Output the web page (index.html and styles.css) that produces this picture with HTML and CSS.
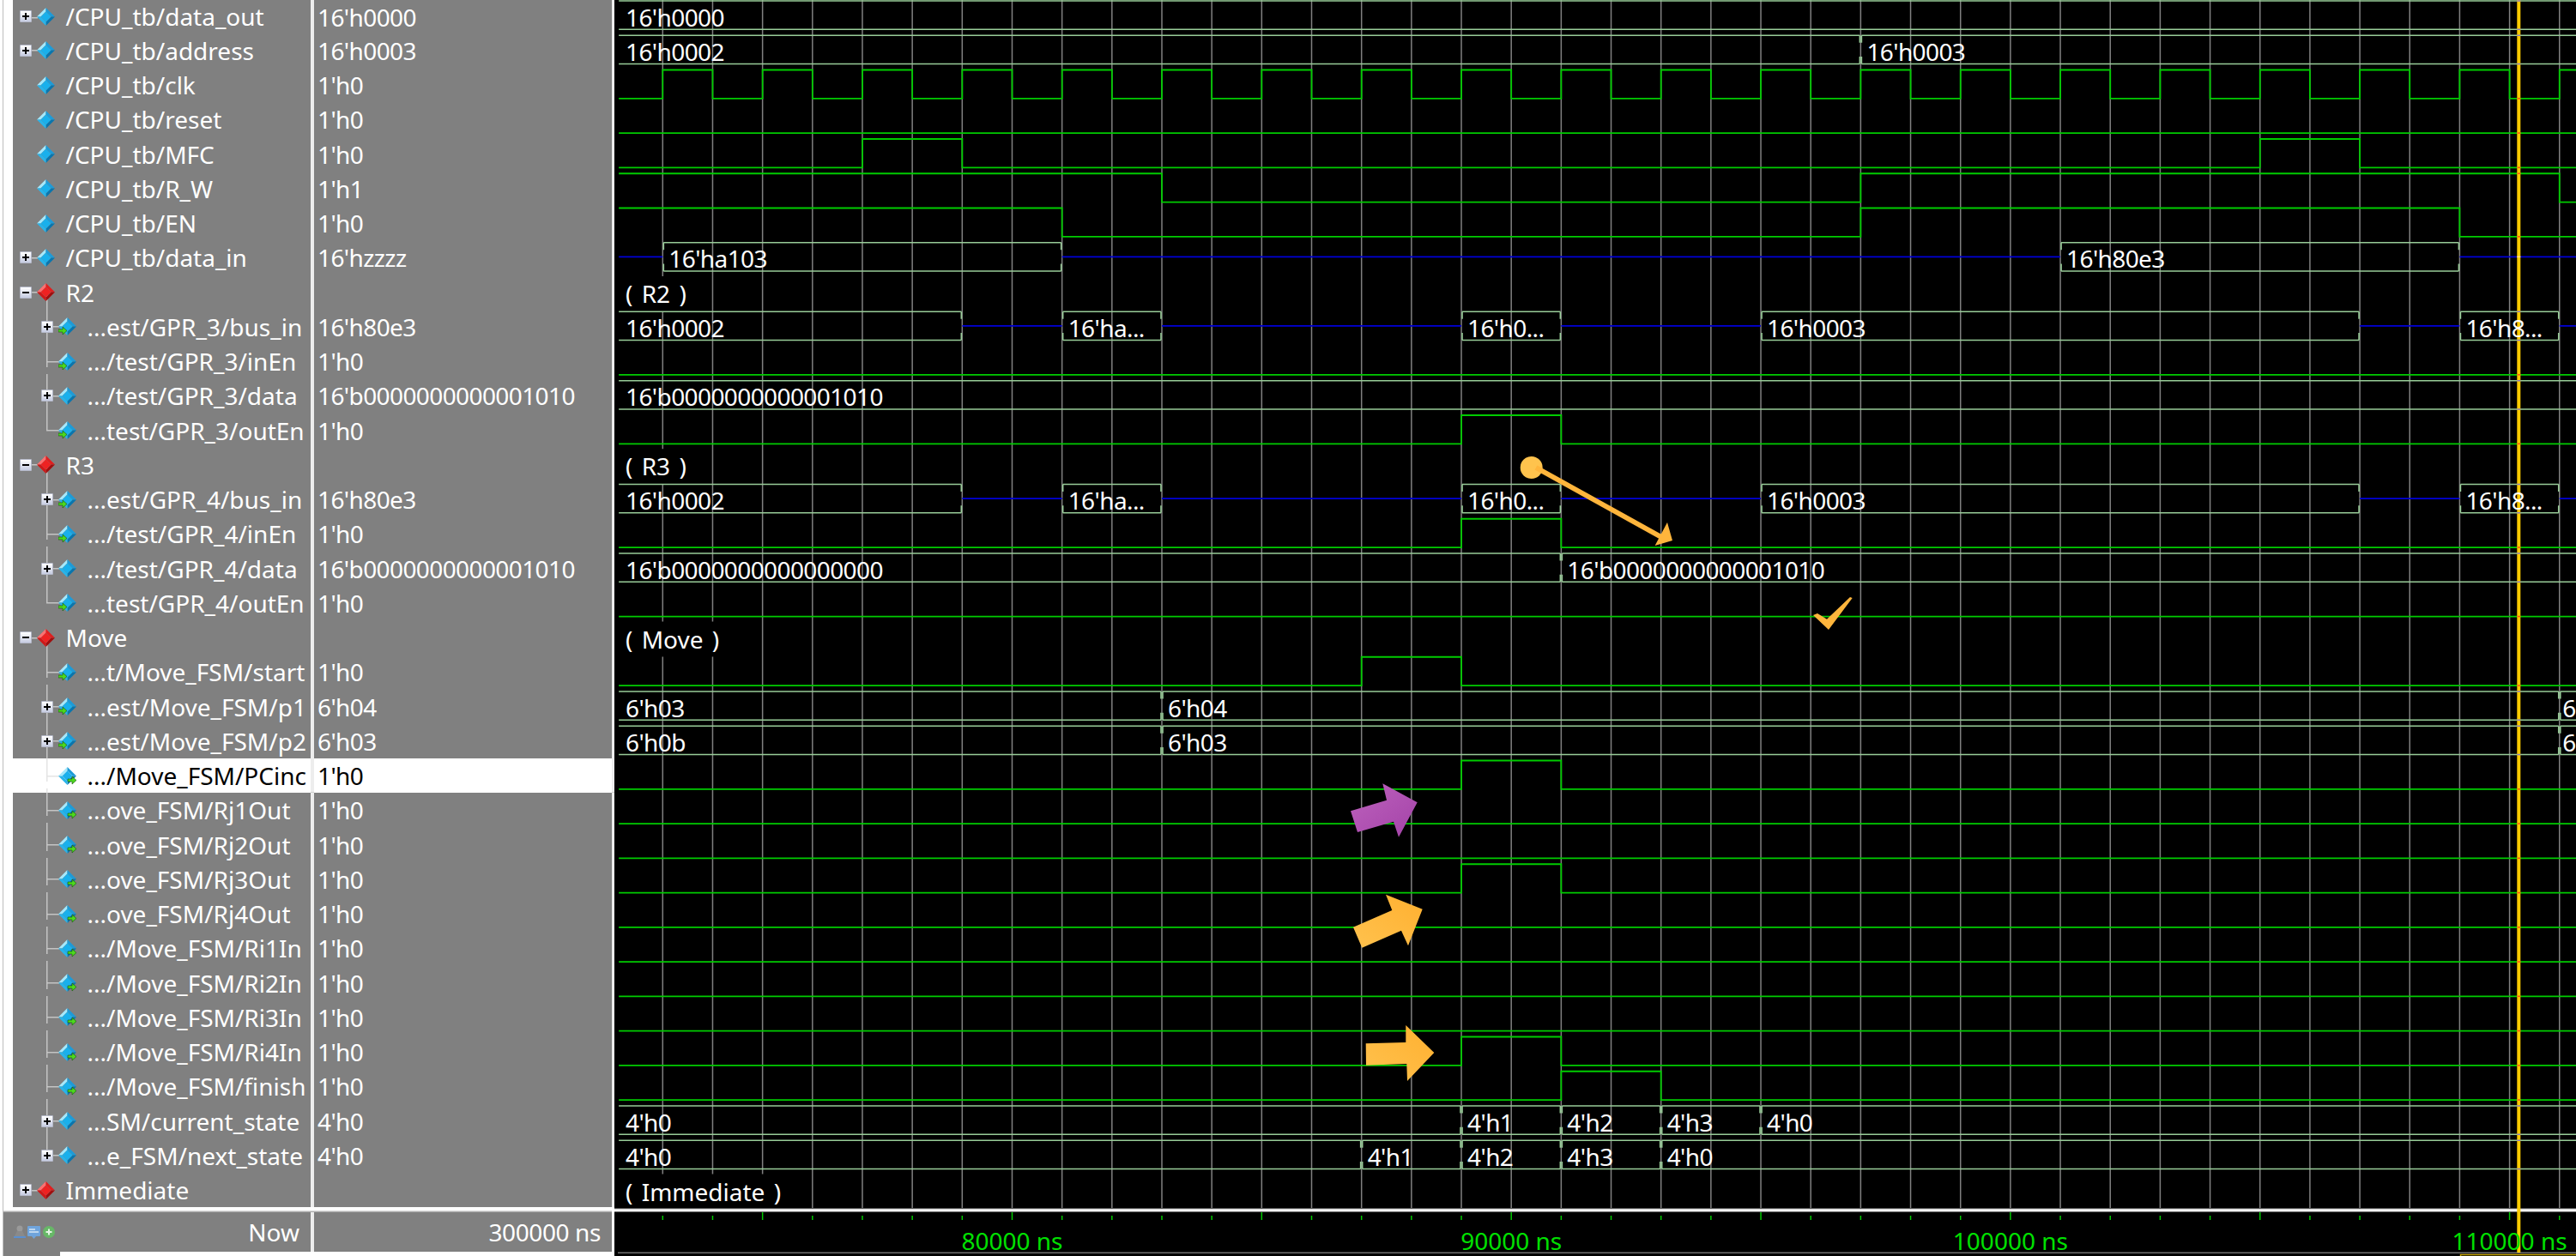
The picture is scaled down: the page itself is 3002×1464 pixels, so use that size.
FILE: index.html
```html
<!DOCTYPE html>
<html lang="en">
<head>
    <meta charset="UTF-8">
    <title>Wave - CPU_tb</title>
    <link rel="stylesheet" href="styles.css">
</head>
<body>
    <svg class="defs" width="0" height="0">
        <symbol id="gem" viewBox="0 0 21 21">
            <polygon points="10.5,0 0,10.5 4.5,10.5 10.5,4.5" fill="#a5e8fb"/>
            <polygon points="10.5,0 21,10.5 16.5,10.5 10.5,4.5" fill="#1d9bd8"/>
            <polygon points="21,10.5 10.5,21 10.5,16.5 16.5,10.5" fill="#0a76ae"/>
            <polygon points="0,10.5 10.5,21 10.5,16.5 4.5,10.5" fill="#28b4ea"/>
            <polygon points="10.5,4.5 16.5,10.5 10.5,16.5 4.5,10.5" fill="#19b0ec"/>
        </symbol>
        <symbol id="gem-in" viewBox="0 0 21 21">
            <use href="#gem"/>
            <path d="M0 14h5v-3l5 4.5-5 4.5v-3H0z" fill="#4cd81e" stroke="#14500c" stroke-width=".6"/>
        </symbol>
        <symbol id="gem-out" viewBox="0 0 21 21">
            <use href="#gem"/>
            <path d="M11 14h5v-3l5 4.5-5 4.5v-3h-5z" fill="#4cd81e" stroke="#14500c" stroke-width=".6"/>
        </symbol>
        <symbol id="red" viewBox="0 0 21 21">
            <polygon points="10.5,0 0,10.5 4.5,10.5 10.5,4.5" fill="#ff7070"/>
            <polygon points="10.5,0 21,10.5 16.5,10.5 10.5,4.5" fill="#e01f1f"/>
            <polygon points="21,10.5 10.5,21 10.5,16.5 16.5,10.5" fill="#a00f0f"/>
            <polygon points="0,10.5 10.5,21 10.5,16.5 4.5,10.5" fill="#d01818"/>
            <polygon points="10.5,4.5 16.5,10.5 10.5,16.5 4.5,10.5" fill="#ee2222"/>
        </symbol>
    </svg>

    <div class="app">
        <div class="side">
            <div class="names">
                <div class="row first t"><div class="nm"><span class="exp plus"></span><svg class="ico"><use href="#gem"/></svg><span>/CPU_tb/data_out</span></div><div class="val">16'h0000</div></div>
                <div class="row t"><div class="nm"><span class="exp plus"></span><svg class="ico"><use href="#gem"/></svg><span>/CPU_tb/address</span></div><div class="val">16'h0003</div></div>
                <div class="row"><div class="nm"><span class="exp"></span><svg class="ico"><use href="#gem"/></svg><span>/CPU_tb/clk</span></div><div class="val">1'h0</div></div>
                <div class="row"><div class="nm"><span class="exp"></span><svg class="ico"><use href="#gem"/></svg><span>/CPU_tb/reset</span></div><div class="val">1'h0</div></div>
                <div class="row"><div class="nm"><span class="exp"></span><svg class="ico"><use href="#gem"/></svg><span>/CPU_tb/MFC</span></div><div class="val">1'h0</div></div>
                <div class="row"><div class="nm"><span class="exp"></span><svg class="ico"><use href="#gem"/></svg><span>/CPU_tb/R_W</span></div><div class="val">1'h1</div></div>
                <div class="row"><div class="nm"><span class="exp"></span><svg class="ico"><use href="#gem"/></svg><span>/CPU_tb/EN</span></div><div class="val">1'h0</div></div>
                <div class="row t"><div class="nm"><span class="exp plus"></span><svg class="ico"><use href="#gem"/></svg><span>/CPU_tb/data_in</span></div><div class="val">16'hzzzz</div></div>

                <div class="row t grp"><div class="nm"><span class="exp minus"></span><svg class="ico"><use href="#red"/></svg><span>R2</span></div><div class="val"></div></div>
                <div class="row sub box"><div class="nm"><span class="exp plus"></span><svg class="ico"><use href="#gem-in"/></svg><span>...est/GPR_3/bus_in</span></div><div class="val">16'h80e3</div></div>
                <div class="row sub"><div class="nm"><span class="exp"></span><svg class="ico"><use href="#gem-in"/></svg><span>.../test/GPR_3/inEn</span></div><div class="val">1'h0</div></div>
                <div class="row sub box"><div class="nm"><span class="exp plus"></span><svg class="ico"><use href="#gem"/></svg><span>.../test/GPR_3/data</span></div><div class="val">16'b0000000000001010</div></div>
                <div class="row sub last"><div class="nm"><span class="exp"></span><svg class="ico"><use href="#gem-in"/></svg><span>...test/GPR_3/outEn</span></div><div class="val">1'h0</div></div>

                <div class="row t grp"><div class="nm"><span class="exp minus"></span><svg class="ico"><use href="#red"/></svg><span>R3</span></div><div class="val"></div></div>
                <div class="row sub box"><div class="nm"><span class="exp plus"></span><svg class="ico"><use href="#gem-in"/></svg><span>...est/GPR_4/bus_in</span></div><div class="val">16'h80e3</div></div>
                <div class="row sub"><div class="nm"><span class="exp"></span><svg class="ico"><use href="#gem-in"/></svg><span>.../test/GPR_4/inEn</span></div><div class="val">1'h0</div></div>
                <div class="row sub box"><div class="nm"><span class="exp plus"></span><svg class="ico"><use href="#gem"/></svg><span>.../test/GPR_4/data</span></div><div class="val">16'b0000000000001010</div></div>
                <div class="row sub last"><div class="nm"><span class="exp"></span><svg class="ico"><use href="#gem-in"/></svg><span>...test/GPR_4/outEn</span></div><div class="val">1'h0</div></div>

                <div class="row t grp"><div class="nm"><span class="exp minus"></span><svg class="ico"><use href="#red"/></svg><span>Move</span></div><div class="val"></div></div>
                <div class="row sub"><div class="nm"><span class="exp"></span><svg class="ico"><use href="#gem-in"/></svg><span>...t/Move_FSM/start</span></div><div class="val">1'h0</div></div>
                <div class="row sub box"><div class="nm"><span class="exp plus"></span><svg class="ico"><use href="#gem-in"/></svg><span>...est/Move_FSM/p1</span></div><div class="val">6'h04</div></div>
                <div class="row sub box"><div class="nm"><span class="exp plus"></span><svg class="ico"><use href="#gem-in"/></svg><span>...est/Move_FSM/p2</span></div><div class="val">6'h03</div></div>
                <div class="row sub sel"><div class="nm"><span class="exp"></span><svg class="ico"><use href="#gem-out"/></svg><span>.../Move_FSM/PCinc</span></div><div class="val">1'h0</div></div>
                <div class="row sub"><div class="nm"><span class="exp"></span><svg class="ico"><use href="#gem-out"/></svg><span>...ove_FSM/Rj1Out</span></div><div class="val">1'h0</div></div>
                <div class="row sub"><div class="nm"><span class="exp"></span><svg class="ico"><use href="#gem-out"/></svg><span>...ove_FSM/Rj2Out</span></div><div class="val">1'h0</div></div>
                <div class="row sub"><div class="nm"><span class="exp"></span><svg class="ico"><use href="#gem-out"/></svg><span>...ove_FSM/Rj3Out</span></div><div class="val">1'h0</div></div>
                <div class="row sub"><div class="nm"><span class="exp"></span><svg class="ico"><use href="#gem-out"/></svg><span>...ove_FSM/Rj4Out</span></div><div class="val">1'h0</div></div>
                <div class="row sub"><div class="nm"><span class="exp"></span><svg class="ico"><use href="#gem-out"/></svg><span>.../Move_FSM/Ri1In</span></div><div class="val">1'h0</div></div>
                <div class="row sub"><div class="nm"><span class="exp"></span><svg class="ico"><use href="#gem-out"/></svg><span>.../Move_FSM/Ri2In</span></div><div class="val">1'h0</div></div>
                <div class="row sub"><div class="nm"><span class="exp"></span><svg class="ico"><use href="#gem-out"/></svg><span>.../Move_FSM/Ri3In</span></div><div class="val">1'h0</div></div>
                <div class="row sub"><div class="nm"><span class="exp"></span><svg class="ico"><use href="#gem-out"/></svg><span>.../Move_FSM/Ri4In</span></div><div class="val">1'h0</div></div>
                <div class="row sub"><div class="nm"><span class="exp"></span><svg class="ico"><use href="#gem-out"/></svg><span>.../Move_FSM/finish</span></div><div class="val">1'h0</div></div>
                <div class="row sub box"><div class="nm"><span class="exp plus"></span><svg class="ico"><use href="#gem"/></svg><span>...SM/current_state</span></div><div class="val">4'h0</div></div>
                <div class="row sub last"><div class="nm"><span class="exp plus"></span><svg class="ico"><use href="#gem"/></svg><span>...e_FSM/next_state</span></div><div class="val">4'h0</div></div>

                <div class="row t"><div class="nm"><span class="exp plus"></span><svg class="ico"><use href="#red"/></svg><span>Immediate</span></div><div class="val"></div></div>
            </div>

            <div class="foot">
                <div class="foot-row">
                    <div class="now">
                        <svg class="tools" width="50" height="16" viewBox="0 0 50 16">
                            <circle cx="7" cy="4" r="3.5" fill="#9a9a9a"/>
                            <path d="M1 13l3-6h6l3 6z" fill="#8a8a8a"/>
                            <path d="M0 13h14v2H0z" fill="#5a8fd0"/>
                            <rect x="16" y="1" width="15" height="12" rx="1" fill="#6fa4dc"/>
                            <path d="M18 5h7M18 8h11" stroke="#d8e6f4" stroke-width="1.4"/>
                            <path d="M21 13h5l-2.500 3z" fill="#6fa4dc"/>
                            <circle cx="41" cy="8" r="7" fill="#67b867"/>
                            <path d="M37.500 8h7M41 4.500v7" stroke="#e4f4e4" stroke-width="2"/>
                        </svg>
                        <span>Now</span>
                    </div>
                    <div class="now-val">300000 ns</div>
                </div>
                <div class="hbar"></div>
            </div>
        </div>

        <svg id="wave" class="wave" viewBox="716 0 2286 1464">
            <defs>
                <linearGradient id="purple" x1="0" y1="0" x2="1" y2="1">
                    <stop offset="0" stop-color="#bd62bd"/>
                    <stop offset="1" stop-color="#a443a8"/>
                </linearGradient>
                <linearGradient id="orange" x1="0" y1="1" x2="1" y2="0">
                    <stop offset="0" stop-color="#ffc24e"/>
                    <stop offset="1" stop-color="#ffb030"/>
                </linearGradient>
            </defs>
            <g id="signals"></g>
            <!-- notes somebody drew over the capture -->
            <g class="notes">
                <polygon fill="url(#purple)" points="1574,945.300 1616,932.700 1611.300,913.300 1651.700,935.300 1630,975.700 1624,957.700 1582,970"/>
                <polygon fill="url(#orange)" points="1577,1080.700 1622.300,1061 1615,1042.700 1657.700,1059.700 1641,1102.300 1633,1084.700 1587.300,1104.700"/>
                <polygon fill="url(#orange)" points="1591.700,1216.300 1638.300,1215 1638.300,1195 1671.300,1227 1640,1260 1639.300,1240 1592,1241.700"/>
                <circle cx="1784.700" cy="545" r="13" fill="#ffc34d"/>
                <line x1="1790" y1="545" x2="1936" y2="626" stroke="#ffb53c" stroke-width="6"/>
                <polygon fill="#ffb53c" points="1949,630 1943,609 1928.600,636"/>
                <polygon fill="#ffb53c" points="2113,717 2118,715 2129,721.700 2156,696 2158.700,697 2131,734"/>
            </g>
        </svg>
    </div>
    <script src="script.js"></script>
</body>
</html>
```

FILE: styles.css
```css
html, body {
    margin: 0;
    padding: 0;
    background-color: #fff;
    overflow: hidden;
}

body {
    font-family: "Noto Sans", sans-serif;
    font-size: 28px;
    color: #fff;
}

.defs {
    position: absolute;
}

.app {
    display: flex;
    width: 3002px;
    height: 1464px;
}

.side {
    --tree: #c4c4c4;
    width: 716px;
    flex: none;
    display: flex;
    flex-direction: column;
    background: linear-gradient(#bdbdbd, #bdbdbd) 3px 0 / 1px 100% no-repeat, #fff;
}

.names {
    margin-left: 15px;
    height: 1409px;
    overflow: hidden;
}

.row {
    display: flex;
    gap: 4px;
    height: 40.25px;
    line-height: 40px;
    background-color: #ededed;
}

.row.first {
    height: 38.75px;
}

.nm, .val {
    width: 347px;
    flex: none;
    white-space: nowrap;
    overflow: hidden;
    background-color: #808080;
}

.nm {
    display: flex;
    align-items: center;
    padding-left: 8px;
    box-sizing: border-box;
}

.val {
    padding-left: 4px;
    box-sizing: border-box;
    letter-spacing: -0.6px;
}

.row.sel {
    --tree: #e4e4e4;
    color: #000;
    box-shadow: inset 0 -1px #cfcfcf;
}

.row.sel .nm, .row.sel .val {
    background-color: #fff;
}

.exp {
    width: 14px;
    height: 14px;
    flex: none;
    margin-right: 6px;
    box-sizing: border-box;
}

.exp.plus, .exp.minus {
    border: 1px solid #b4b8c8;
    border-radius: 1px;
    background-color: #e6eaf6;
}

.exp.minus {
    background-image: linear-gradient(#000, #000), linear-gradient(#fff, #c6cce2);
    background-size: 8px 2px, 100% 100%;
    background-position: center, center;
    background-repeat: no-repeat;
}

.exp.plus {
    background-image: linear-gradient(#000, #000), linear-gradient(#000, #000), linear-gradient(#fff, #c6cce2);
    background-size: 8px 2px, 2px 8px, 100% 100%;
    background-position: center, center, center;
    background-repeat: no-repeat;
}

.ico {
    width: 21px;
    height: 21px;
    flex: none;
    margin-right: 12.5px;
}

/* second level, the tree lines are painted behind the expander and icon */
.sub .nm {
    padding-left: 33px;
    background-image:
        linear-gradient(var(--tree), var(--tree)),
        linear-gradient(var(--tree), var(--tree)),
        linear-gradient(var(--tree), var(--tree));
    background-repeat: no-repeat;
    background-size: 1.5px 27px, 1.5px 6px, 15px 1.5px;
    background-position: 38.5px 0, 38.5px 35px, 39px 19.5px;
}

.sub.box .nm {
    background-size: 1.5px 100%, 0 0, 15px 1.5px;
}

.sub.last .nm {
    background-size: 1.5px 20px, 0 0, 15px 1.5px;
}

/* first level connector between expander and gem */
.t .nm {
    background-image: linear-gradient(var(--tree), var(--tree));
    background-repeat: no-repeat;
    background-size: 8px 1.5px;
    background-position: 21px 19.5px;
}

.grp .nm {
    background-image: linear-gradient(var(--tree), var(--tree)), linear-gradient(var(--tree), var(--tree));
    background-size: 8px 1.5px, 1.5px 20px;
    background-position: 21px 19.5px, 38.5px 20px;
}

.foot {
    flex: 1;
    margin: 3.5px 3px 0 4px;
    display: flex;
    flex-direction: column;
    background-color: #808080;
    box-shadow: 0 -1.5px #b0b0b0;
}

.foot-row {
    flex: 1;
    display: flex;
    gap: 4px;
    line-height: 46px;
    background-color: #ededed;
}

.now, .now-val {
    flex: none;
    box-sizing: border-box;
    background-color: #808080;
    text-align: right;
}

.now {
    width: 358px;
    padding: 0 13px 0 12px;
    display: flex;
    align-items: center;
    justify-content: space-between;
}

.now-val {
    width: 347px;
    padding-right: 13px;
    letter-spacing: -0.4px;
}

.hbar {
    height: 5px;
    margin-left: 66px;
    background-color: #fff;
}

.wave {
    flex: 1;
    display: block;
    height: 1464px;
    background-color: #000;
}

.wave text {
    font-family: "Noto Sans", sans-serif;
    font-size: 28px;
    fill: #fff;
    letter-spacing: -0.6px;
}

.wave text.group {
    letter-spacing: 0;
    word-spacing: 3px;
}

.wave text.tick {
    fill: #00e000;
    letter-spacing: 0;
}

.wave .gridline {
    stroke: #808080;
    stroke-width: 1.5;
}

.wave .bit {
    fill: none;
    stroke: #00cc00;
    stroke-width: 1.8;
}

.wave .bus {
    fill: none;
    stroke: #98cc98;
    stroke-width: 1.6;
}

.wave .hiz {
    stroke: #0000d8;
    stroke-width: 1.6;
}

.wave .axis {
    stroke: #00c800;
    stroke-width: 1.5;
}
```

FILE: script.js
```js
// time axis: one grid step is 1000 ns, k = 7 is 80000 ns
const GRID0 = 772.3;
const STEP = 58.17;
const ROW_H = 40.25;
const START = -0.88; // left edge of the traces
const END = 38.7;
const CURSOR_X = 2933.3;

const x = k => GRID0 + STEP * k;
const top_ = i => 1 + ROW_H * i;

const SVG_NS = 'http://www.w3.org/2000/svg';
const root = document.getElementById('signals');

function add(name, attrs, text) {
    const el = document.createElementNS(SVG_NS, name);
    for (const key in attrs) el.setAttribute(key, attrs[key]);
    if (text) el.textContent = text;
    root.appendChild(el);
    return el;
}

function clockEdges() {
    const edges = [];
    for (let k = 0; k <= 38; k++) edges.push(k);
    return edges;
}

const busIn = [[START, "16'h0002"], [6, null], [8, "16'ha..."], [10, null], [16, "16'h0..."], [18, null], [22, "16'h0003"], [34, null], [36, "16'h8..."], [38, null]];

const rows = [
    { bus: [[START, "16'h0000"]] },
    { bus: [[START, "16'h0002"], [24, "16'h0003"]] },
    { bit: 0, edges: clockEdges() },
    { bit: 0, edges: [] },
    { bit: 0, edges: [4, 6, 32, 34] },
    { bit: 1, edges: [10, 24, 38] },
    { bit: 1, edges: [8, 24, 36] },
    { bus: [[START, null], [0, "16'ha103"], [8, null], [28, "16'h80e3"], [36, null]] },
    { group: '( R2 )' },
    { bus: busIn },
    { bit: 0, edges: [] },
    { bus: [[START, "16'b0000000000001010"]] },
    { bit: 0, edges: [16, 18] },
    { group: '( R3 )' },
    { bus: busIn },
    { bit: 0, edges: [16, 18] },
    { bus: [[START, "16'b0000000000000000"], [18, "16'b0000000000001010"]] },
    { bit: 0, edges: [] },
    { group: '( Move )' },
    { bit: 0, edges: [14, 16] },
    { bus: [[START, "6'h03"], [10, "6'h04"], [38, "6", 3.5]] },
    { bus: [[START, "6'h0b"], [10, "6'h03"], [38, "6", 3.5]] },
    { bit: 0, edges: [16, 18] },
    { bit: 0, edges: [] },
    { bit: 0, edges: [] },
    { bit: 0, edges: [16, 18] },
    { bit: 0, edges: [] },
    { bit: 0, edges: [] },
    { bit: 0, edges: [] },
    { bit: 0, edges: [] },
    { bit: 0, edges: [16, 18] },
    { bit: 0, edges: [18, 20] },
    { bus: [[START, "4'h0"], [16, "4'h1"], [18, "4'h2"], [20, "4'h3"], [22, "4'h0"]] },
    { bus: [[START, "4'h0"], [14, "4'h1"], [16, "4'h2"], [18, "4'h3"], [20, "4'h0"]] },
    { group: '( Immediate )' }
];

// grid
for (let k = 0; k <= 38; k++) {
    add('line', { class: 'gridline', x1: x(k), y1: 0, x2: x(k), y2: 1408 });
}

// group rows paint an opaque label box over the grid
const labels = [];
rows.forEach((r, i) => {
    const t = top_(i);
    if (r.group) {
        const box = add('rect', { x: 717, y: t - 1, height: 41, fill: '#000' });
        labels.push({ x: 729, y: t + 30, text: r.group, box, cls: 'group' });
    }
});

function drawBit(r, t) {
    const hi = t, lo = t + 33.3;
    let level = r.bit;
    let d = `M${x(START)} ${level ? hi : lo}`;
    r.edges.forEach(k => {
        d += `H${x(k)}`;
        level = 1 - level;
        d += `V${level ? hi : lo}`;
    });
    d += `H${x(END)}`;
    add('path', { class: 'bit', d });
}

function drawBus(r, t) {
    const hi = t, lo = t + 33.3, mid = t + 16.6;
    r.bus.forEach((seg, n) => {
        const a = seg[0], label = seg[1];
        const b = n + 1 < r.bus.length ? r.bus[n + 1][0] : END;
        const xa = x(a), xb = x(b);
        if (label === null) {
            add('line', { class: 'hiz', x1: xa, y1: mid, x2: xb, y2: mid });
            return;
        }
        const l = a === START ? xa : xa + 1;
        const h = b === END ? xb : xb - 1;
        let d = `M${l} ${hi}H${h}M${l} ${lo}H${h}`;
        if (a !== START) d += `M${l} ${hi}v8.5M${l} ${lo}v-8.5`;
        if (b !== END) d += `M${h} ${hi}v8.5M${h} ${lo}v-8.5`;
        add('path', { class: 'bus', d });
        const inset = seg[2] === undefined ? 7 : seg[2];
        labels.push({ x: (a === START ? 729 : xa + inset), y: t + 29.5, text: label, cls: 'value' });
    });
}

rows.forEach((r, i) => {
    if (r.bus) drawBus(r, top_(i));
    else if (!r.group) drawBit(r, top_(i));
});

// divider under the wave area, axis ticks and the cursor
add('rect', { x: 716, y: 1408.5, width: 2286, height: 4.2, fill: '#a8a8a8' });
add('rect', { x: 716, y: 1409.5, width: 2286, height: 2.2, fill: '#fff' });
add('rect', { x: 720, y: 1459.5, width: 2282, height: 1.5, fill: '#707070' });
for (let k = 0; k <= 38; k++) {
    const major = k % 5 === 2;
    add('line', { class: 'axis', x1: x(k), y1: major ? 1413 : 1417, x2: x(k), y2: 1422 });
}
add('path', { d: 'M2867.500 1464V1462.500H3002', stroke: '#c8a800', 'stroke-width': 1.5, fill: 'none' });
add('rect', { x: CURSOR_X, y: 0, width: 4, height: 1460, fill: '#ffcc00' });

// where a trace runs under the cursor it shows through in another colour
rows.forEach((r, i) => {
    const t = top_(i);
    if (r.group) return;
    const mark = (y, fill) => add('rect', { x: CURSOR_X, y: y - 0.75, width: 4, height: 1.5, fill });
    if (r.bus) {
        const seg = r.bus.filter(s => s[0] < 37.2).pop();
        if (seg[1] === null) {
            mark(t + 16.6, '#ffe0a0');
        } else {
            mark(t, '#8a80c0');
            mark(t + 33.3, '#8a80c0');
        }
    } else {
        const high = (r.bit + r.edges.filter(k => k <= 37).length) % 2;
        mark(high ? t : t + 33.3, '#ff5a10');
    }
});

// text goes last, it sits on top of the cursor
labels.forEach(l => {
    const el = add('text', { class: l.cls, x: l.x, y: l.y }, l.text);
    if (l.box) l.box.setAttribute('width', el.getComputedTextLength() + 24);
});
[[7, '80000 ns'], [17, '90000 ns'], [27, '100000 ns'], [37, '110000 ns']].forEach(t => {
    add('text', { class: 'tick', x: x(t[0]), y: 1456.5, 'text-anchor': 'middle' }, t[1]);
});
```
